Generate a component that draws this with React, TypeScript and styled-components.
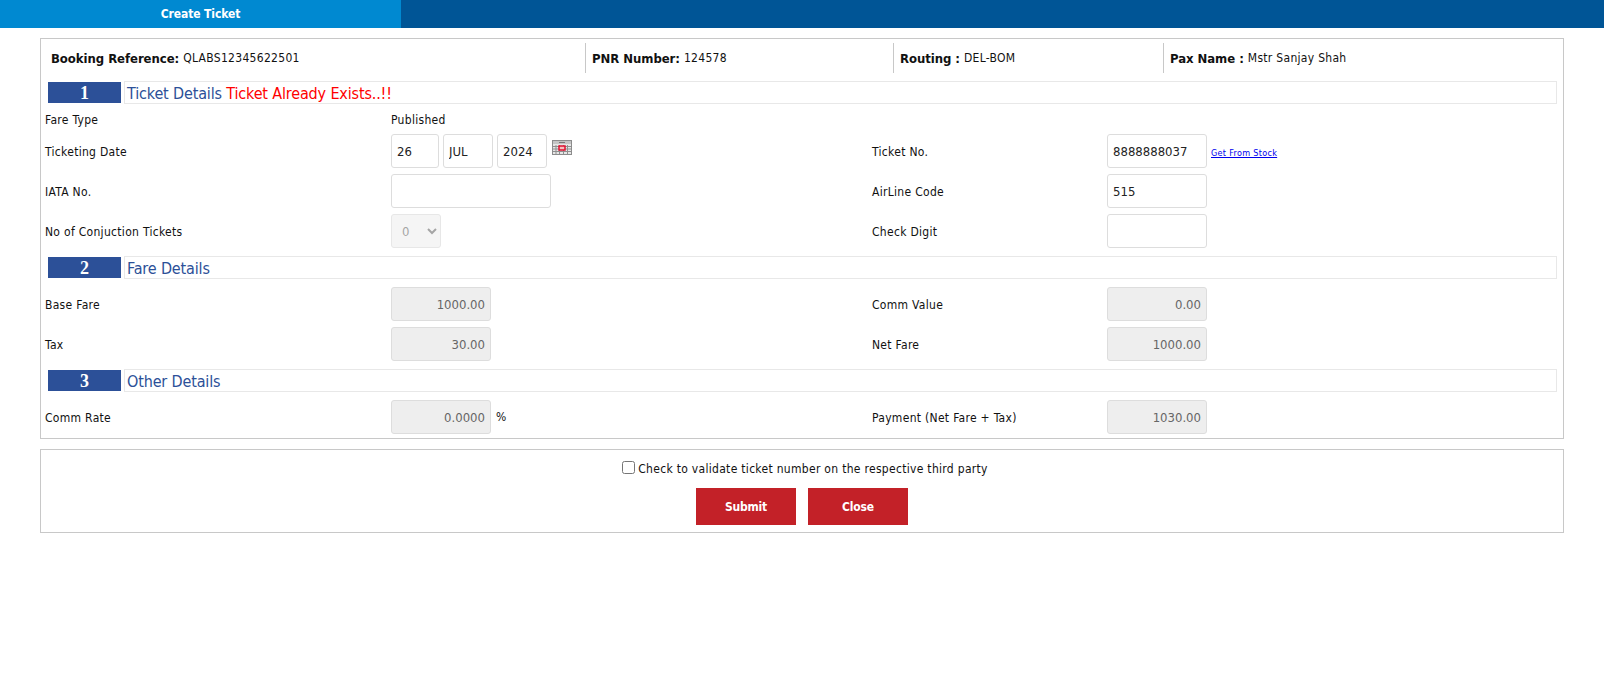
import styled, { createGlobalStyle } from "styled-components";

const BODY_FONT = `"DejaVu Sans Condensed", "Noto Sans", "Liberation Sans", sans-serif`;

const GlobalStyle = createGlobalStyle`
	html, body {
		margin: 0;
		padding: 0;
		background: #fff;
		font-family: ${BODY_FONT};
		font-size: 12px;
		letter-spacing: 0.3px;
		color: #111;
	}
`;

const TabBar = styled.div`
	height: 28px;
	background: #005596;
`;

const Tab = styled.div`
	width: 401px;
	height: 28px;
	background: #0089d1;
	color: #fff;
	font-weight: 700;
	font-size: 12px;
	letter-spacing: -0.1px;
	line-height: 29px;
	text-align: center;
`;

const Panel = styled.section<{ $top: number; $bottom?: number }>`
	box-sizing: border-box;
	width: 1524px;
	margin: ${(p) => p.$top}px 0 0 40px;
	padding-bottom: ${(p) => p.$bottom ?? 0}px;
	border: 1px solid #c8c8c8;
`;

const InfoBar = styled.div`
	display: grid;
	grid-template-columns: 544px 308px 270px 1fr;
	padding-top: 4px;
	height: 30px;
`;

const InfoCell = styled.div<{ $first?: boolean }>`
	display: flex;
	align-items: center;
	gap: 4px;
	padding-left: ${(p) => (p.$first ? 10 : 6)}px;
	border-left: ${(p) => (p.$first ? "none" : "1px solid #c8c8c8")};
	b {
		font-size: 13px;
		letter-spacing: -0.05px;
	}
`;

const SectionHead = styled.div<{ $top: number }>`
	display: flex;
	align-items: center;
	gap: 3px;
	margin: ${(p) => p.$top}px 6px 0 7px;
`;

const SectionNumber = styled.div`
	width: 73px;
	height: 21px;
	background: #2c5098;
	color: #fff;
	font-family: "Liberation Serif", serif;
	font-weight: 700;
	font-size: 18px;
	letter-spacing: 0;
	line-height: 22px;
	text-align: center;
	flex: none;
`;

const SectionTitle = styled.div`
	flex: 1;
	box-sizing: border-box;
	height: 23px;
	border: 1px solid #e8e8e8;
	padding-left: 2px;
	font-size: 16px;
	letter-spacing: -0.15px;
	line-height: 23px;
	color: #2c5098;
	span {
		color: #f00;
	}
`;

const Label = styled.div`
	padding-top: 2px;
`;

const FareRow = styled.div`
	display: grid;
	grid-template-columns: 346px 1fr;
	align-items: center;
	height: 30px;
	padding-left: 4px;
`;

const Rows = styled.div<{ $top: number }>`
	display: grid;
	grid-template-columns: 346px 481px 235px 1fr;
	grid-auto-rows: 34px;
	row-gap: 6px;
	align-items: center;
	padding: ${(p) => p.$top}px 0 0 4px;
`;

const Field = styled.div`
	display: flex;
	align-items: center;
	gap: 5px;
`;

const DateField = styled(Field)`
	gap: 4px;
`;

const Input = styled.input<{ $width: number; $locked?: boolean }>`
	box-sizing: border-box;
	width: ${(p) => p.$width}px;
	height: 34px;
	padding: 0 5px;
	border: 1px solid #ddd;
	border-radius: 3px;
	font-family: ${BODY_FONT};
	font-size: 13px;
	color: #222;
	background: #fff;
	text-align: ${(p) => (p.$locked ? "right" : "left")};
	&:disabled {
		background: #eee;
		color: #666;
	}
`;

const Select = styled.select`
	box-sizing: border-box;
	width: 50px;
	height: 34px;
	padding: 0 6px;
	border: 1px solid #ddd;
	border-radius: 3px;
	background: #f2f2f2;
	font-family: ${BODY_FONT};
	font-size: 13px;
`;

const StockLink = styled.a`
	color: #00e;
	font-size: 9px;
	text-decoration: underline;
	margin-left: -1px;
	padding-top: 3px;
`;

const CalendarBox = styled.svg`
	align-self: flex-start;
	margin: 6px 0 0 1px;
`;

const CheckRow = styled.label`
	display: flex;
	justify-content: center;
	align-items: center;
	gap: 3px;
	padding: 10px 0 0 6px;
	height: 18px;
	input {
		margin: 0 0 3px;
		width: 13px;
		height: 13px;
	}
`;

const Actions = styled.div`
	display: flex;
	justify-content: center;
	gap: 12px;
	margin: 10px 0 7px;
`;

const Button = styled.button`
	width: 100px;
	height: 37px;
	border: none;
	background: #c32128;
	color: #fff;
	font-family: ${BODY_FONT};
	font-weight: 700;
	font-size: 12px;
	letter-spacing: -0.2px;
`;

function CalendarIcon() {
	return (
		<CalendarBox width="20" height="15" viewBox="0 0 20 15">
			<rect x="0.5" y="0.5" width="19" height="14" fill="#e6e6e6" stroke="#8c8c8c" />
			<rect x="1" y="1" width="18" height="3" fill="#c4c4c4" />
			<path d="M7 2.5H13" stroke="#777" strokeWidth="1" />
			<path
				d="M1 6.5H19M1 9H19M1 11.5H19M4 5V14M7.5 5V14M11.5 5V14M15.5 5V14"
				stroke="#8f8f8f"
				strokeWidth="1"
			/>
			<rect x="7" y="6" width="6" height="4" fill="#f4c0c0" stroke="#e01030" strokeWidth="1.5" />
		</CalendarBox>
	);
}

export default function App(): JSX.Element {
	return (
		<>
			<GlobalStyle />
			<TabBar>
				<Tab>Create Ticket</Tab>
			</TabBar>

			<Panel $top={10} $bottom={4}>
				<InfoBar>
					<InfoCell $first>
						<b>Booking Reference:</b> QLABS12345622501
					</InfoCell>
					<InfoCell>
						<b>PNR Number:</b> 124578
					</InfoCell>
					<InfoCell>
						<b>Routing :</b> DEL-BOM
					</InfoCell>
					<InfoCell>
						<b>Pax Name :</b> Mstr Sanjay Shah
					</InfoCell>
				</InfoBar>

				<SectionHead $top={8}>
					<SectionNumber>1</SectionNumber>
					<SectionTitle>
						Ticket Details <span>Ticket Already Exists..!!</span>
					</SectionTitle>
				</SectionHead>
				<FareRow>
					<Label>Fare Type</Label>
					<Label>Published</Label>
				</FareRow>
				<Rows $top={0}>
					<Label>Ticketing Date</Label>
					<DateField>
						<Input $width={48} defaultValue="26" />
						<Input $width={50} defaultValue="JUL" />
						<Input $width={50} defaultValue="2024" />
						<CalendarIcon />
					</DateField>
					<Label>Ticket No.</Label>
					<Field>
						<Input $width={100} defaultValue="8888888037" />
						<StockLink href="#">Get From Stock</StockLink>
					</Field>
					<Label>IATA No.</Label>
					<Input $width={160} />
					<Label>AirLine Code</Label>
					<Input $width={100} defaultValue="515" />
					<Label>No of Conjuction Tickets</Label>
					<Select disabled>
						<option>0</option>
					</Select>
					<Label>Check Digit</Label>
					<Input $width={100} />
				</Rows>

				<SectionHead $top={8}>
					<SectionNumber>2</SectionNumber>
					<SectionTitle>Fare Details</SectionTitle>
				</SectionHead>
				<Rows $top={8}>
					<Label>Base Fare</Label>
					<Input $width={100} $locked disabled value="1000.00" />
					<Label>Comm Value</Label>
					<Input $width={100} $locked disabled value="0.00" />
					<Label>Tax</Label>
					<Input $width={100} $locked disabled value="30.00" />
					<Label>Net Fare</Label>
					<Input $width={100} $locked disabled value="1000.00" />
				</Rows>

				<SectionHead $top={8}>
					<SectionNumber>3</SectionNumber>
					<SectionTitle>Other Details</SectionTitle>
				</SectionHead>
				<Rows $top={8}>
					<Label>Comm Rate</Label>
					<Field>
						<Input $width={100} $locked disabled value="0.0000" />
						<span>%</span>
					</Field>
					<Label>Payment (Net Fare + Tax)</Label>
					<Input $width={100} $locked disabled value="1030.00" />
				</Rows>
			</Panel>

			<Panel $top={10}>
				<CheckRow>
					<input type="checkbox" />
					Check to validate ticket number on the respective third party
				</CheckRow>
				<Actions>
					<Button>Submit</Button>
					<Button>Close</Button>
				</Actions>
			</Panel>
		</>
	);
}
